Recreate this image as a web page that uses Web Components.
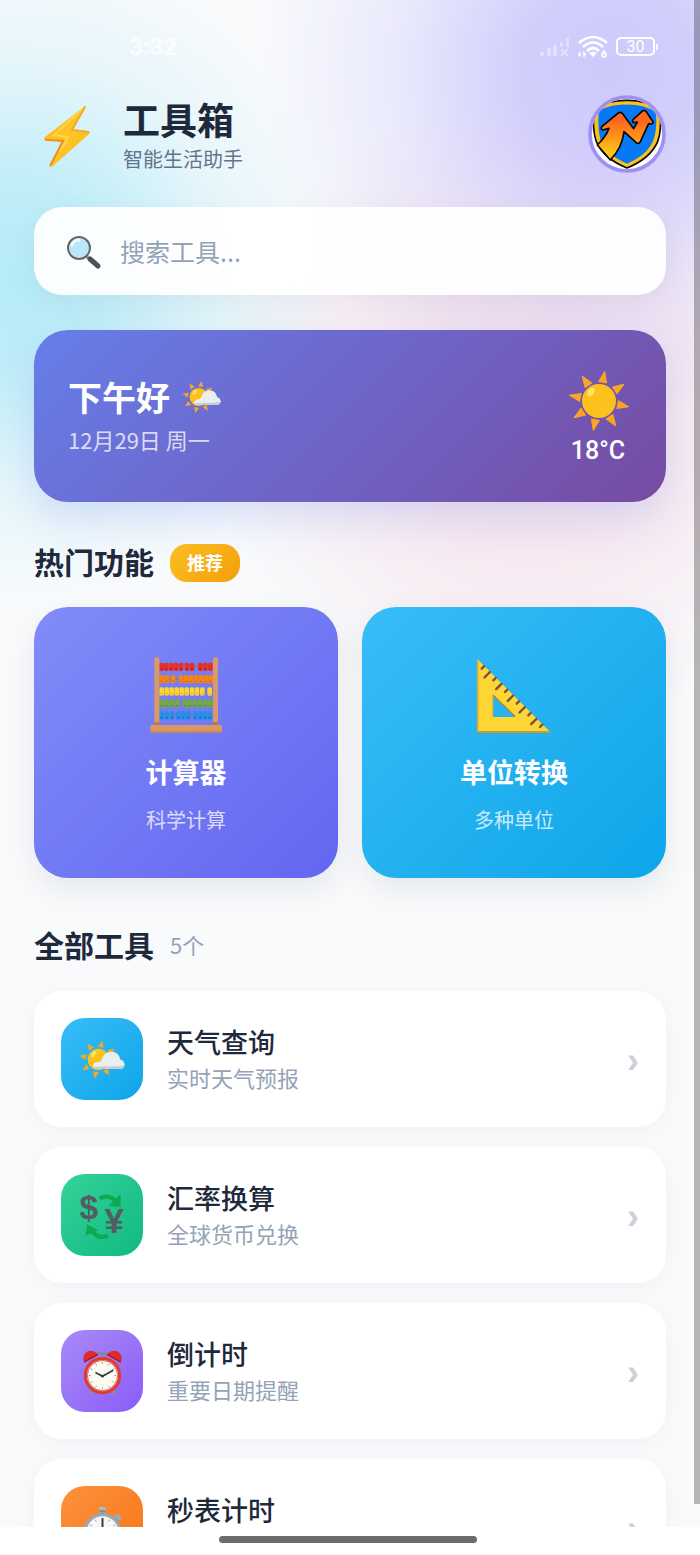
<!DOCTYPE html>
<html lang="zh-CN">
<head>
<meta charset="utf-8">
<meta name="viewport" content="width=device-width, initial-scale=1">
<title>工具箱</title>
<style>
	html, body {
		margin: 0;
		height: 100%;
	}

	body {
		font-family: "Noto Sans CJK SC", sans-serif;
		color: #1e293b;
		background: #ffffff;
	}
</style>
</head>
<body>
<toolbox-app></toolbox-app>

<script>
const SUN_RAYS = (cx, cy, inner, outer, half) =>
	[0, 45, 90, 135, 180, 225, 270, 315].map((a) =>
		`<path d="M${cx} ${cy - outer}L${cx + half} ${cy - inner}H${cx - half}Z" transform="rotate(${a + 11} ${cx} ${cy})" fill="#fba524" stroke="#fba524" stroke-width="1" stroke-linejoin="round"/>`
	).join('');

const BEADS = [
	{ y: 41, color: '#e53027', dark: '#b71c1c', xs: [47, 61, 76, 90, 105, 123, 138, 163, 178, 193] },
	{ y: 78, color: '#fb8409', dark: '#e65f00', xs: [47, 62, 81, 105, 120, 135, 150, 165, 180, 194] },
	{ y: 115, color: '#fdd435', dark: '#f5b400', xs: [47, 62, 77, 92, 107, 122, 138, 153, 169, 191] },
	{ y: 151, color: '#72ab46', dark: '#558b2f', xs: [46, 61, 77, 93, 117, 132, 147, 162, 177, 192] },
	{ y: 187, color: '#2390e8', dark: '#1565c0', xs: [47, 62, 78, 97, 112, 127, 148, 163, 177, 191] }
];

const beadRows = BEADS.map((row) => `
	<path d="M40 ${row.y}H201" stroke="#a97346" stroke-width="3"/>
	${row.xs.map((x) => `<rect x="${x - 7}" y="${row.y - 12}" width="14" height="25" rx="5" fill="${row.color}"/><path d="M${x - 3} ${row.y + 7}h6" stroke="${row.dark}" stroke-width="4"/>`).join('')}
`).join('');

// Ruler marks along the long side of the set square
const rulerMarks = Array.from({ length: 11 }, (_, i) => {
	const x = 30 + i * 17.5;
	const y = 40 + i * 17.5;
	const len = i % 2 ? 16 : 7;
	return `<path d="M${x} ${y}l${-len} ${len}" stroke="#7b4f3f" stroke-width="7" stroke-linecap="round"/>`;
}).join('');

const clockMarks = (cx, cy, r) => Array.from({ length: 12 }, (_, i) =>
	`<path d="M${cx} ${cy - r}v6" stroke="#8a949b" stroke-width="2.5" transform="rotate(${i * 30} ${cx} ${cy})"/>`
).join('');

const ICONS = {
	bolt: { box: '0 0 68 68', body: `
		<defs><linearGradient id="g" x1="0" y1="0" x2="1" y2="1"><stop offset="0" stop-color="#feb804"/><stop offset=".5" stop-color="#fdc52a"/><stop offset="1" stop-color="#fbb914"/></linearGradient></defs>
		<path d="M51 6L11 37Q9 40 13 40L29 41L16 65Q16 68 19 66L55 34Q57 32 54 31L38 30L52 7Q52 5 51 6Z" fill="url(#g)"/>
		<path d="M51 7L20 35L34 37L26 52" fill="none" stroke="#ffdc58" stroke-width="2" opacity=".7"/>
		<path d="M11 39Q12 40 14 40L29 41L16 66" fill="none" stroke="#f28d1b" stroke-width="2"/>
		<path d="M51 7L38 30L55 32" fill="none" stroke="#f9a825" stroke-width="2"/>` },
	search: { box: '0 0 38 38', body: `
		<path d="M20 24L24 28" stroke="#8b979d" stroke-width="3"/>
		<path d="M24 27L32 34" stroke="#4d5257" stroke-width="5" stroke-linecap="round"/>
		<circle cx="13" cy="16" r="11" fill="#b8e7fb" stroke="#5f676c" stroke-width="2"/>
		<circle cx="13" cy="16" r="9" fill="none" stroke="#d8dde0" stroke-width="1"/>
		<path d="M6 13Q8 8 13 8" fill="none" stroke="#edfaff" stroke-width="3" stroke-linecap="round"/>` },
	sun: { box: '0 0 68 68', body: `
		${SUN_RAYS(35, 36, 19, 30, 4)}
		<circle cx="35" cy="36" r="17" fill="#fcc11d"/>
		<ellipse cx="27" cy="27" rx="3" ry="5" fill="#fee167" transform="rotate(35 27 27)"/>` },
	suncloud: { box: '0 0 140 120', body: `
		${SUN_RAYS(58, 60, 38, 57, 8)}
		<circle cx="58" cy="60" r="32" fill="#fcc11d"/>
		<ellipse cx="44" cy="44" rx="6" ry="10" fill="#fee167" transform="rotate(35 44 44)"/>
		<path d="M52 88Q40 87 42 77Q46 66 59 68Q66 67 70 54Q78 36 98 36Q120 39 123 60Q136 64 136 77Q134 88 122 88Z" fill="#e9eef1"/>
		<path d="M42 81Q58 83 78 80Q110 83 135 77Q134 88 122 88H52Q44 87 42 81Z" fill="#c4ced4"/>` },
	abacus: { box: '0 0 240 240', body: `
		${beadRows}
		<rect x="25" y="13" width="15" height="206" rx="6" fill="#d99a69"/>
		<rect x="201" y="13" width="15" height="206" rx="6" fill="#d99a69"/>
		<path d="M25 207h15v9H25zM201 207h15v9H201z" fill="#b9784c"/>
		<rect x="13" y="216" width="215" height="23" rx="3" fill="#d99863"/>
		<path d="M14 237H227" stroke="#b97d4d" stroke-width="3"/>` },
	setsquare: { box: '0 0 240 240', body: `
		<path d="M10 18L231 239H10ZM56 125V192H125Z" fill="#fdd534" fill-rule="evenodd"/>
		<path d="M12 20V236" stroke="#f3a51c" stroke-width="4"/>
		<path d="M10 237H230" stroke="#b78a2b" stroke-width="5"/>
		<path d="M57 126L124 191" stroke="#b78a2b" stroke-width="4"/>
		<path d="M57 125V191" stroke="#e1aa22" stroke-width="3"/>
		${rulerMarks}` },
	exchange: { box: '0 0 140 140', body: `
		<path d="M61 20Q84 6 108 24" fill="none" stroke="#0daa52" stroke-width="12"/>
		<path d="M124 6V44L88 42Z" fill="#0daa52"/>
		<path d="M86 130Q60 142 40 118" fill="none" stroke="#0daa52" stroke-width="12"/>
		<path d="M20 130L24 96L58 114Z" fill="#0daa52"/>
		<g font-family="Liberation Sans, sans-serif" font-weight="700" fill="#555c60" text-anchor="middle">
			<text x="29" y="80" font-size="100">$</text>
			<text x="105" y="122" font-size="104">¥</text>
		</g>` },
	alarm: { box: '0 0 140 140', body: `
		<path d="M38 128L33 136M102 128L107 136" stroke="#82929c" stroke-width="8" stroke-linecap="round"/>
		<path d="M56 16H84M70 16V30" stroke="#7a8b96" stroke-width="6"/>
		<path d="M15 42Q8 20 24 11Q42 3 57 19ZM125 42Q132 20 116 11Q98 3 83 19Z" fill="#dd2c2a"/>
		<path d="M15 42L57 19M125 42L83 19" stroke="#a91c1e" stroke-width="4"/>
		<circle cx="70" cy="82" r="51" fill="#fbfaf3" stroke="#e53630" stroke-width="9"/>
		<circle cx="70" cy="82" r="45" fill="none" stroke="#bd211e" stroke-width="2"/>
		${clockMarks(70, 82, 41)}
		<path d="M49 73L70 84L102 66" fill="none" stroke="#343c40" stroke-width="5"/>
		<circle cx="70" cy="84" r="4" fill="#343c40"/>` },
	stopwatch: { box: '0 0 140 140', body: `
		<path d="M70 22V32M114 44L106 52" stroke="#78858d" stroke-width="10"/>
		<rect x="60" y="9" width="20" height="16" rx="4" fill="#aebac1"/>
		<path d="M61 21H79" stroke="#697880" stroke-width="4"/>
		<rect x="108" y="32" width="19" height="14" rx="4" fill="#9caab2" transform="rotate(42 117 39)"/>
		<circle cx="70" cy="84" r="52" fill="#f7f7f7" stroke="#9ba9b1" stroke-width="9"/>
		${clockMarks(70, 84, 43)}
		<path d="M70 42V88" stroke="#343c40" stroke-width="6"/>
		<circle cx="70" cy="86" r="6" fill="#343c40"/>` },
	avatar: { box: '0 0 234 234', body: `
		<defs>
			<linearGradient id="a" x1="0" y1="0" x2="0" y2="1"><stop offset=".2" stop-color="#ff651c"/><stop offset=".55" stop-color="#ff971b"/><stop offset=".85" stop-color="#fcc51b"/></linearGradient>
			<clipPath id="c"><circle cx="117" cy="117" r="106"/></clipPath>
		</defs>
		<circle cx="117" cy="117" r="112" fill="#ffffff"/>
		<g clip-path="url(#c)" stroke-linejoin="round">
			<path d="M18 40Q60 15 117 16Q174 15 216 44Q222 105 209 140Q187 191 117 219Q47 191 25 140Q12 103 18 40Z" fill="#fbc21d" stroke="#090909" stroke-width="5"/>
			<path d="M32 47Q75 26 117 29Q161 27 204 51Q208 105 196 136Q178 181 117 206Q56 181 38 136Q28 103 32 47Z" fill="#0879f5"/>
			<path d="M28 150Q55 124 63 100L44 105Q36 101 42 94L91 54Q98 49 104 56L137 101L148 81L137 83Q130 79 136 73L162 49Q169 43 175 50L195 80Q197 87 188 87L182 86L157 140Q151 149 144 142L108 110Q102 160 67 195Z" fill="url(#a)" stroke="#090909" stroke-width="5"/>
		</g>
		<circle cx="117" cy="117" r="111" fill="none" stroke="#9e91f0" stroke-width="11"/>` },
	signal: { box: '0 0 30 22', body: `
		<g fill="#ffffff" opacity=".4">
			<rect x="0" y="16" width="4" height="4" rx="1"/><rect x="7" y="12" width="4" height="8" rx="1"/><rect x="13" y="9" width="4" height="11" rx="1"/><rect x="20" y="6" width="3" height="5" rx="1"/><rect x="26" y="2" width="3" height="9" rx="1"/>
		</g>
		<path d="M21 13L28 20M28 13L21 20" stroke="#ffffff" stroke-width="2" opacity=".4"/>` },
	wifi: { box: '0 0 30 24', body: `
		<g fill="none" stroke="#ffffff" stroke-width="2.6">
			<path d="M1 8Q15 -4 29 8"/><path d="M5 12Q15 3 25 12"/><path d="M9 16Q15 10 21 16"/>
		</g>
		<path d="M11 18Q15 15 19 18L15 22Z" fill="#ffffff"/>
		<path d="M2 17V21M0 19L2 21M6 22V18L8 20" fill="none" stroke="#ffffff" stroke-width="1.6"/>
		<circle cx="26" cy="20" r="2" fill="none" stroke="#ffffff" stroke-width="1.8"/><path d="M24 19L27 15" fill="none" stroke="#ffffff" stroke-width="1.8"/>` }
};

class EmojiIcon extends HTMLElement {
	constructor() {
		super();
		this.attachShadow({ mode: 'open' });
	}

	connectedCallback() {
		const icon = ICONS[this.getAttribute('name')];
		this.shadowRoot.innerHTML = `
			<style>
				:host { display: block; flex-shrink: 0; }
				svg { display: block; width: 100%; height: 100%; }
			</style>
			<svg viewBox="${icon.box}" aria-hidden="true">${icon.body}</svg>
		`;
	}
}

class StatusBar extends HTMLElement {
	constructor() {
		super();
		this.attachShadow({ mode: 'open' });
		this.shadowRoot.innerHTML = `
			<style>
				:host {
					display: flex;
					align-items: center;
					justify-content: space-between;
					height: 95px;
					padding: 0 42px 2px 129px;
					box-sizing: border-box;
					font-family: Roboto, sans-serif;
					color: #ffffff;
				}

				.time {
					font-size: 24px;
					font-weight: 700;
					opacity: 0.75;
				}

				.indicators {
					display: flex;
					align-items: center;
					gap: 8px;
				}

				.signal { width: 30px; height: 22px; }
				.wifi { width: 30px; height: 24px; }

				.battery {
					display: flex;
					align-items: center;
					gap: 1px;
				}

				.level {
					width: 35px;
					border: 2px solid #ffffff;
					border-radius: 5px;
					font-size: 16px;
					line-height: 15px;
					text-align: center;
				}

				.nub {
					width: 2px;
					height: 6px;
					border-radius: 1px;
					background: #ffffff;
				}
			</style>
			<span class="time">3:32</span>
			<div class="indicators">
				<emoji-icon class="signal" name="signal"></emoji-icon>
				<emoji-icon class="wifi" name="wifi"></emoji-icon>
				<div class="battery"><span class="level">30</span><span class="nub"></span></div>
			</div>
		`;
	}
}

class AppHeader extends HTMLElement {
	constructor() {
		super();
		this.attachShadow({ mode: 'open' });
		this.shadowRoot.innerHTML = `
			<style>
				:host {
					display: flex;
					align-items: center;
					gap: 21px;
				}

				.logo { width: 68px; height: 68px; }
				.titles { flex: 1; }
				::slotted(*) { display: block; }

				h1 {
					margin: 0;
					font-size: 37px;
					line-height: 48px;
					font-weight: 700;
				}

				p {
					margin: 2px 0 0;
					font-size: 20px;
					line-height: 28px;
					color: #64748b;
				}

				button {
					width: 78px;
					height: 78px;
					padding: 0;
					border: 0;
					border-radius: 50%;
					background: none;
				}

				button emoji-icon { height: 78px; }
			</style>
			<emoji-icon class="logo" name="bolt"></emoji-icon>
			<div class="titles">
				<h1><slot name="title"></slot></h1>
				<p><slot name="subtitle"></slot></p>
			</div>
			<button type="button" aria-label="个人中心"><emoji-icon name="avatar"></emoji-icon></button>
		`;
	}
}

class SearchBox extends HTMLElement {
	constructor() {
		super();
		this.attachShadow({ mode: 'open' });
		this.shadowRoot.innerHTML = `
			<style>
				:host {
					display: flex;
					align-items: center;
					gap: 16px;
					height: 88px;
					padding: 0 32px;
					box-sizing: border-box;
					border-radius: 28px;
					background: rgba(255, 255, 255, 0.93);
					box-shadow: 0 8px 28px rgba(15, 23, 42, 0.05);
				}

				label { display: block; }
				emoji-icon { width: 38px; height: 38px; }

				input {
					flex: 1;
					min-width: 0;
					padding: 0;
					border: 0;
					outline: 0;
					background: none;
					font: inherit;
					font-size: 25px;
					color: inherit;
				}

				input::placeholder { color: #94a3b8; opacity: 1; }
			</style>
			<label for="q"><emoji-icon name="search"></emoji-icon></label>
			<input id="q" type="text" aria-label="搜索工具" placeholder="搜索工具...">
		`;
	}
}

class GreetingBanner extends HTMLElement {
	constructor() {
		super();
		this.attachShadow({ mode: 'open' });
		this.shadowRoot.innerHTML = `
			<style>
				:host {
					display: flex;
					align-items: center;
					justify-content: space-between;
					padding: 34px;
					border-radius: 34px;
					background: linear-gradient(135deg, #667eea 0%, #764ba2 100%);
					box-shadow: 0 16px 40px rgba(102, 126, 234, 0.22);
					color: #ffffff;
				}

				.hello {
					display: flex;
					align-items: center;
					gap: 12px;
					font-size: 34px;
					line-height: 46px;
					font-weight: 700;
				}

				.hello emoji-icon { width: 40px; height: 34px; }

				.date {
					font-size: 22px;
					line-height: 38px;
					opacity: 0.75;
				}

				.weather { text-align: center; }
				.weather emoji-icon { width: 68px; height: 70px; }

				.temp {
					font-family: Roboto, sans-serif;
					font-size: 25px;
					line-height: 34px;
					font-weight: 500;
				}
			</style>
			<div>
				<div class="hello"><slot></slot><emoji-icon name="suncloud"></emoji-icon></div>
				<div class="date"><slot name="date"></slot></div>
			</div>
			<div class="weather">
				<emoji-icon name="sun"></emoji-icon>
				<div class="temp"><slot name="temp"></slot></div>
			</div>
		`;
	}
}

class SectionTitle extends HTMLElement {
	constructor() {
		super();
		this.attachShadow({ mode: 'open' });
		this.shadowRoot.innerHTML = `
			<style>
				:host {
					display: flex;
					align-items: flex-start;
					gap: 16px;
					height: 38px;
				}

				h2 {
					margin: 0;
					font-size: 30px;
					line-height: 34px;
					font-weight: 700;
				}

				::slotted([slot="badge"]) {
					padding: 0 17px 2px;
					border-radius: 17px;
					background: linear-gradient(135deg, #fbbf24, #f59e0b);
					color: #ffffff;
					font-size: 18px;
					line-height: 36px;
					font-weight: 700;
				}

				::slotted([slot="count"]) {
					color: #94a3b8;
					font-size: 22px;
					line-height: 34px;
				}
			</style>
			<h2><slot></slot></h2>
			<slot name="badge"></slot>
			<slot name="count"></slot>
		`;
	}
}

class FeatureCard extends HTMLElement {
	constructor() {
		super();
		this.attachShadow({ mode: 'open' });
	}

	connectedCallback() {
		this.shadowRoot.innerHTML = `
			<style>
				:host { display: block; }

				button {
					display: flex;
					flex-direction: column;
					align-items: center;
					width: 100%;
					padding: 46px 20px 44px;
					border: 0;
					border-radius: 34px;
					background: var(--card-bg);
					box-shadow: 0 12px 32px rgba(15, 23, 42, 0.08);
					color: #ffffff;
					font: inherit;
				}

				emoji-icon { width: 80px; height: 80px; }

				.name {
					margin-top: 19px;
					font-size: 27px;
					line-height: 40px;
					font-weight: 700;
				}

				.desc {
					margin-top: 14px;
					font-size: 20px;
					line-height: 28px;
					opacity: 0.75;
				}
			</style>
			<button type="button">
				<emoji-icon name="${this.getAttribute('icon')}"></emoji-icon>
				<span class="name"><slot></slot></span>
				<span class="desc"><slot name="desc"></slot></span>
			</button>
		`;
	}
}

class ToolRow extends HTMLElement {
	constructor() {
		super();
		this.attachShadow({ mode: 'open' });
	}

	connectedCallback() {
		this.shadowRoot.innerHTML = `
			<style>
				:host { display: block; }

				button {
					display: flex;
					align-items: center;
					gap: 24px;
					width: 100%;
					padding: 27px;
					border: 0;
					border-radius: 28px;
					background: #ffffff;
					box-shadow: 0 4px 20px rgba(15, 23, 42, 0.04);
					color: inherit;
					font: inherit;
					text-align: left;
				}

				.tile {
					display: flex;
					align-items: center;
					justify-content: center;
					width: 82px;
					height: 82px;
					border-radius: 24px;
					background: var(--tile-bg);
				}

				emoji-icon { width: 47px; height: 47px; }
				.text { flex: 1; }
				.name, .desc { display: block; }

				.name {
					font-size: 27px;
					line-height: 36px;
					font-weight: 500;
				}

				.desc {
					min-height: 34px;
					font-size: 22px;
					line-height: 34px;
					color: #94a3b8;
				}

				.arrow {
					padding-top: 4px;
					font-family: "Liberation Sans", sans-serif;
					font-size: 36px;
					line-height: 40px;
					font-weight: 700;
					color: #cbd0da;
				}
			</style>
			<button type="button">
				<span class="tile"><emoji-icon name="${this.getAttribute('icon')}"></emoji-icon></span>
				<span class="text">
					<span class="name"><slot></slot></span>
					<span class="desc"><slot name="desc"></slot></span>
				</span>
				<span class="arrow">›</span>
			</button>
		`;
	}
}

class ToolboxApp extends HTMLElement {
	constructor() {
		super();
		this.attachShadow({ mode: 'open' });
		this.shadowRoot.innerHTML = `
			<style>
				:host {
					display: flex;
					flex-direction: column;
					position: relative;
					height: 100vh;
					overflow: hidden;
				}

				.page {
					flex: 1;
					min-height: 0;
					overflow: hidden;
					background:
						radial-gradient(circle 350px at 87% 70px, rgba(190, 184, 252, 0.74) 0%, rgba(190, 184, 252, 0.66) 25%, rgba(190, 184, 252, 0.24) 62%, rgba(190, 184, 252, 0) 100%),
						radial-gradient(circle 360px at 2% 275px, rgba(160, 230, 246, 0.76) 0%, rgba(160, 230, 246, 0.64) 25%, rgba(160, 230, 246, 0.2) 60%, rgba(160, 230, 246, 0) 90%),
						radial-gradient(circle 320px at 76% 410px, rgba(246, 214, 228, 0.75) 0%, rgba(246, 214, 228, 0.52) 40%, rgba(246, 214, 228, 0) 100%),
						#f8fafc;
				}

				main { padding: 0 34px; }
				search-box { margin-top: 34px; }
				greeting-banner { margin-top: 35px; }
				.hot { margin-top: 42px; }
				.all { margin-top: 49px; }

				.features {
					display: grid;
					grid-template-columns: 1fr 1fr;
					gap: 24px;
					margin-top: 25px;
				}

				.tools {
					display: grid;
					gap: 20px;
					margin-top: 26px;
				}

				.indigo { --card-bg: linear-gradient(135deg, #818cf8, #6366f1); }
				.blue { --card-bg: linear-gradient(135deg, #38bdf8, #0ea5e9); }
				.sky { --tile-bg: linear-gradient(135deg, #38bdf8, #0ea5e9); }
				.green { --tile-bg: linear-gradient(135deg, #34d399, #10b981); }
				.violet { --tile-bg: linear-gradient(135deg, #a78bfa, #8b5cf6); }
				.orange { --tile-bg: linear-gradient(135deg, #fb923c, #f97316); }

				/* Overlay scrollbar, floats above the page */
				.thumb {
					position: absolute;
					top: 0;
					right: 0;
					bottom: 51px;
					width: 6px;
					background: rgba(0, 0, 0, 0.27);
				}

				.home {
					display: flex;
					justify-content: center;
					padding: 9px 4px 12px 0;
					background: #ffffff;
				}

				.home span {
					width: 37%;
					height: 7px;
					border-radius: 4px;
					background: #6b6c70;
				}
			</style>
			<div class="page">
				<status-bar></status-bar>
				<main>
					<app-header>
						<span slot="title">工具箱</span>
						<span slot="subtitle">智能生活助手</span>
					</app-header>
					<search-box></search-box>
					<greeting-banner>下午好<span slot="date">12月29日 周一</span><span slot="temp">18°C</span></greeting-banner>

					<section-title class="hot">热门功能<span slot="badge">推荐</span></section-title>
					<div class="features">
						<feature-card class="indigo" icon="abacus">计算器<span slot="desc">科学计算</span></feature-card>
						<feature-card class="blue" icon="setsquare">单位转换<span slot="desc">多种单位</span></feature-card>
					</div>

					<section-title class="all">全部工具<span slot="count">5个</span></section-title>
					<div class="tools">
						<tool-row class="sky" icon="suncloud">天气查询<span slot="desc">实时天气预报</span></tool-row>
						<tool-row class="green" icon="exchange">汇率换算<span slot="desc">全球货币兑换</span></tool-row>
						<tool-row class="violet" icon="alarm">倒计时<span slot="desc">重要日期提醒</span></tool-row>
						<tool-row class="orange" icon="stopwatch">秒表计时</tool-row>
					</div>
				</main>
			</div>
			<div class="home"><span></span></div>
			<div class="thumb"></div>
		`;
	}
}

customElements.define('emoji-icon', EmojiIcon);
customElements.define('status-bar', StatusBar);
customElements.define('app-header', AppHeader);
customElements.define('search-box', SearchBox);
customElements.define('greeting-banner', GreetingBanner);
customElements.define('section-title', SectionTitle);
customElements.define('feature-card', FeatureCard);
customElements.define('tool-row', ToolRow);
customElements.define('toolbox-app', ToolboxApp);
</script>
</body>
</html>
